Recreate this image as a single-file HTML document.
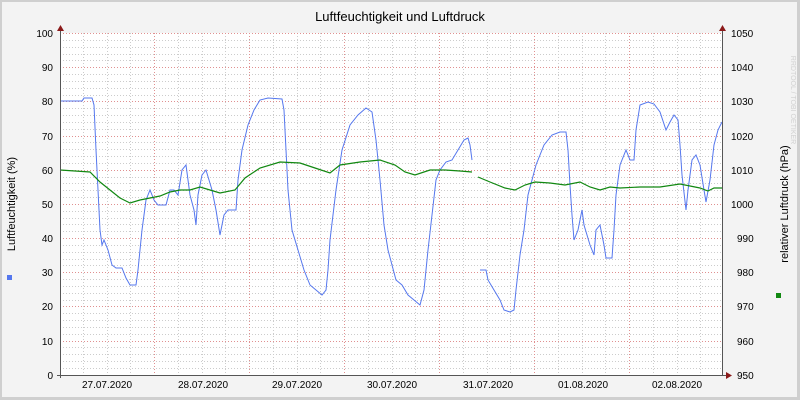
<!DOCTYPE html>
<html><head><meta charset="utf-8"><style>
html,body{margin:0;padding:0;background:#f3f3f3}
svg{display:block}
text{font-family:"Liberation Sans",sans-serif;fill:#000}
</style></head><body>
<svg width="800" height="400" viewBox="0 0 800 400" xmlns="http://www.w3.org/2000/svg">
<rect x="0" y="0" width="800" height="400" fill="#cfcfcf"/>
<rect x="2" y="2" width="795" height="395" fill="#f3f3f3"/>
<rect x="60" y="33" width="663" height="342" fill="#fff"/>
<g stroke="#cccccc" stroke-width="1" stroke-dasharray="1,2" shape-rendering="crispEdges">
<path d="M60 40.5H723M60 47.5H723M60 54.5H723M60 60.5H723M60 74.5H723M60 81.5H723M60 88.5H723M60 95.5H723M60 108.5H723M60 115.5H723M60 122.5H723M60 129.5H723M60 142.5H723M60 149.5H723M60 156.5H723M60 163.5H723M60 177.5H723M60 183.5H723M60 190.5H723M60 197.5H723M60 211.5H723M60 218.5H723M60 224.5H723M60 231.5H723M60 245.5H723M60 252.5H723M60 259.5H723M60 265.5H723M60 279.5H723M60 286.5H723M60 293.5H723M60 300.5H723M60 313.5H723M60 320.5H723M60 327.5H723M60 334.5H723M60 347.5H723M60 354.5H723M60 361.5H723M60 368.5H723"/>
<path d="M83.5 33V375M107.5 33V375M130.5 33V375M178.5 33V375M202.5 33V375M225.5 33V375M273.5 33V375M297.5 33V375M320.5 33V375M368.5 33V375M392.5 33V375M415.5 33V375M463.5 33V375M487.5 33V375M510.5 33V375M558.5 33V375M582.5 33V375M605.5 33V375M653.5 33V375M677.5 33V375M700.5 33V375"/>
</g>
<g stroke="#e09090" stroke-width="1" stroke-dasharray="1,2" shape-rendering="crispEdges">
<path d="M60 33.5H723M60 67.5H723M60 101.5H723M60 136.5H723M60 170.5H723M60 204.5H723M60 238.5H723M60 272.5H723M60 306.5H723M60 341.5H723"/>
<path d="M154.5 33V375M249.5 33V375M344.5 33V375M439.5 33V375M534.5 33V375M629.5 33V375"/>
</g>
<polyline fill="none" stroke="#5577ee" stroke-width="1" points="60,101 82,101 84,98 92,98 94,105 96,150 98,190 100,230 102,245 104,240 108,250 112,265 116,268 122,268 126,278 130,285 136,285 138,270 142,230 146,200 150,190 154,200 158,205 166,205 170,190 174,190 178,195 182,170 186,165 190,195 194,210 196,225 198,195 202,175 206,170 212,190 216,210 220,235 224,215 228,210 236,210 238,180 242,150 248,125 254,110 260,100 268,98 282,99 284,110 286,150 288,190 292,230 298,250 304,270 310,285 316,290 322,295 326,290 328,270 330,240 336,190 342,150 350,125 358,115 366,108 372,112 376,140 380,180 384,225 388,250 392,265 396,280 402,285 408,295 414,300 420,305 424,290 428,250 432,215 436,180 440,170 446,162 452,160 458,150 464,140 468,138 470,145 472,160"/>
<polyline fill="none" stroke="#5577ee" stroke-width="1" points="480,270 486,270 488,280 494,290 500,300 504,310 510,312 514,310 516,290 520,255 524,230 528,195 536,165 544,145 552,135 560,132 566,132 568,150 570,185 572,215 574,240 578,230 582,210 584,225 590,245 594,255 596,230 600,225 604,245 606,258 612,258 614,230 616,195 620,165 626,150 630,160 634,160 636,130 640,105 648,102 654,104 660,112 666,130 670,122 674,115 678,120 680,145 682,175 686,210 688,190 692,160 696,155 700,165 704,190 706,202 710,180 714,145 718,130 722,122"/>
<polyline fill="none" stroke="#118811" stroke-width="1.2" points="60,170 90,172 100,182 110,190 120,198 130,203 140,200 150,198 160,196 170,192 180,190 190,190 200,187 210,190 220,193 235,190 245,178 260,168 280,162 300,163 315,168 330,173 340,165 360,162 380,160 395,165 405,172 415,175 430,170 445,170 460,171 472,172"/>
<polyline fill="none" stroke="#118811" stroke-width="1.2" points="478,177 490,182 505,188 515,190 525,185 535,182 550,183 565,185 580,182 590,187 600,190 610,187 620,188 640,187 660,187 680,184 690,186 700,188 708,191 714,188 723,188"/>
<g stroke="#555" stroke-width="1" shape-rendering="crispEdges">
<path d="M60.5 30V378M722.5 30V376M57 375.5H726"/>
</g>
<path d="M57 31 L60.5 25 L64 31Z M719 31 L722.5 25 L726 31Z M726 372 L732 375.5 L726 379Z" fill="#8b1a1a"/>
<g font-size="10" text-anchor="end">
<text x="53" y="37">100</text><text x="53" y="71">90</text><text x="53" y="105">80</text><text x="53" y="140">70</text><text x="53" y="174">60</text><text x="53" y="208">50</text><text x="53" y="242">40</text><text x="53" y="276">30</text><text x="53" y="310">20</text><text x="53" y="345">10</text><text x="53" y="379">0</text>
</g>
<g font-size="10" text-anchor="start">
<text x="731" y="37">1050</text><text x="731" y="71">1040</text><text x="731" y="105">1030</text><text x="731" y="140">1020</text><text x="731" y="174">1010</text><text x="731" y="208">1000</text><text x="737" y="242">990</text><text x="737" y="276">980</text><text x="737" y="310">970</text><text x="737" y="345">960</text><text x="737" y="379">950</text>
</g>
<g font-size="10" text-anchor="middle">
<text x="107" y="388">27.07.2020</text><text x="203" y="388">28.07.2020</text><text x="297" y="388">29.07.2020</text><text x="392" y="388">30.07.2020</text><text x="488" y="388">31.07.2020</text><text x="583" y="388">01.08.2020</text><text x="677" y="388">02.08.2020</text>
</g>
<text x="400" y="21" font-size="13" text-anchor="middle">Luftfeuchtigkeit und Luftdruck</text>
<text transform="translate(15,204) rotate(-90)" font-size="11" text-anchor="middle">Luftfeuchtigkeit (%)</text>
<rect x="7" y="275" width="5" height="5" fill="#5577ee"/>
<text transform="translate(788,204) rotate(-90)" font-size="11" text-anchor="middle">relativer Luftdruck (hPa)</text>
<rect x="776" y="293" width="5" height="5" fill="#118811"/>
<text transform="translate(791,100) rotate(90)" font-size="7" text-anchor="middle" style="fill:#d0d0d0">RRDTOOL / TOBI OETIKER</text>
</svg>
</body></html>
